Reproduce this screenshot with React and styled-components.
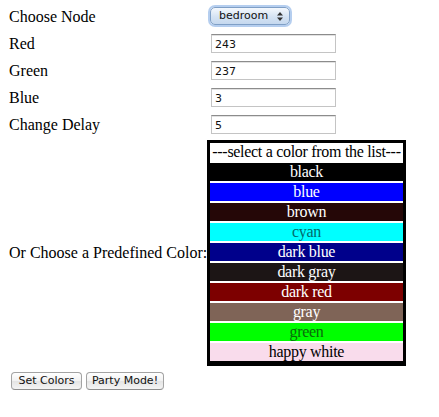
import React from "react";
import styled, { createGlobalStyle } from "styled-components";

const Global = createGlobalStyle`
  html, body { margin: 0; padding: 0; background: #ffffff; }
  body { font-family: "Liberation Serif", "Times New Roman", serif; color: #000; }
`;

const Page = styled.div`
  padding: 3px 0 0 8px;
`;

const Form = styled.div`
  display: grid;
  grid-template-columns: 199px auto;
  grid-template-rows: repeat(5, 27px) auto;
  align-items: center;
  justify-items: start;
`;

const Label = styled.div`
  font-size: 16px;
  line-height: 18px;
  white-space: nowrap;
  padding-left: 1px;
`;

const Field = styled.div`
  padding-left: ${(p) => p.$indent ?? 3}px;
  display: flex;
  align-items: center;
`;

const Select = styled.div`
  position: relative;
  box-sizing: border-box;
  width: 80px;
  height: 18px;
  margin-top: -2px;
  border-radius: 5px;
  border: 1px solid #7f9fc6;
  background: linear-gradient(#f4f8fd, #d5e3f3 55%, #c5d8ef);
  box-shadow: 0 0 0 2px rgba(120, 165, 225, 0.55);
  font-family: "DejaVu Sans", "Liberation Sans", sans-serif;
  font-size: 11px;
  line-height: 16px;
  padding-left: 8px;
  color: #111;
`;

const Arrows = styled.svg`
  position: absolute;
  right: 6px;
  top: 4px;
`;

const Input = styled.input`
  box-sizing: border-box;
  width: 125px;
  height: 19px;
  margin: 0 0 0 1px;
  padding: 1px 3px 0;
  border: 1px solid #c4c4c4;
  border-top-color: #8c8c8c;
  box-shadow: inset 0 1px 0 #e2e2e2;
  font-family: "DejaVu Sans", "Liberation Sans", sans-serif;
  font-size: 11px;
  color: #111;
  background: #fff;
  outline: none;
`;

const ListBox = styled.div`
  box-sizing: border-box;
  width: 199px;
  margin: 2px 0;
  border: 3px solid #000;
  border-bottom-width: 5px;
  background: #fff;
  display: flex;
  flex-direction: column;
  gap: 2px;
`;

const Option = styled.div`
  height: 18px;
  line-height: 18px;
  font-size: 16px;
  letter-spacing: -0.3px;
  text-align: center;
  white-space: nowrap;
  overflow: hidden;
  background: ${(p) => p.$bg};
  color: ${(p) => p.$fg};
`;

const Buttons = styled.div`
  display: flex;
  gap: 4px;
  margin-top: 4px;
  padding-left: 3px;
`;

const Button = styled.button`
  box-sizing: border-box;
  height: 18px;
  width: ${(p) => p.$w}px;
  padding: 0;
  border: 1px solid #a3a3a3;
  border-bottom-color: #8e8e8e;
  border-radius: 4px;
  background: linear-gradient(#ffffff, #f1f1f1 50%, #e4e4e4 51%, #f4f4f4);
  font-family: "DejaVu Sans", "Liberation Sans", sans-serif;
  font-size: 11px;
  color: #111;
  line-height: 16px;
`;

const colors = [
  { name: "---select a color from the list---", bg: "#ffffff", fg: "#000000" },
  { name: "black", bg: "#000000", fg: "#ffffff" },
  { name: "blue", bg: "#0000ff", fg: "#ffffff" },
  { name: "brown", bg: "#250707", fg: "#ffffff" },
  { name: "cyan", bg: "#00ffff", fg: "#006b6b" },
  { name: "dark blue", bg: "#00008b", fg: "#ffffff" },
  { name: "dark gray", bg: "#1c1515", fg: "#ffffff" },
  { name: "dark red", bg: "#7d0000", fg: "#ffffff" },
  { name: "gray", bg: "#7f6457", fg: "#ffffff" },
  { name: "green", bg: "#00ff00", fg: "#0b6a0b" },
  { name: "happy white", bg: "#f9dcec", fg: "#000000" },
];

export default function App() {
  return (
    <>
      <Global />
      <Page>
        <Form>
          <Label>Choose Node</Label>
          <Field $indent={3}>
            <Select>
              bedroom
              <Arrows width="6" height="9" viewBox="0 0 6 9">
                <path d="M0 3.5 L3 0 L6 3.5 Z M0 5.5 L3 9 L6 5.5 Z" fill="#333" />
              </Arrows>
            </Select>
          </Field>
          <Label>Red</Label>
          <Field>
            <Input defaultValue="243" />
          </Field>
          <Label>Green</Label>
          <Field>
            <Input defaultValue="237" />
          </Field>
          <Label>Blue</Label>
          <Field>
            <Input defaultValue="3" />
          </Field>
          <Label>Change Delay</Label>
          <Field>
            <Input defaultValue="5" />
          </Field>
          <Label>Or Choose a Predefined Color:</Label>
          <Field $indent={0}>
            <ListBox>
              {colors.map((c) => (
                <Option key={c.name} $bg={c.bg} $fg={c.fg}>
                  {c.name}
                </Option>
              ))}
            </ListBox>
          </Field>
        </Form>
        <Buttons>
          <Button $w={71}>Set Colors</Button>
          <Button $w={78}>Party Mode!</Button>
        </Buttons>
      </Page>
    </>
  );
}
